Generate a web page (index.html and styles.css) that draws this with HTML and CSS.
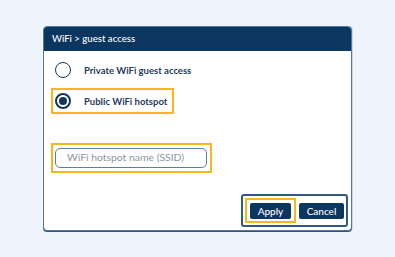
FILE: index.html
```html
<!DOCTYPE html>
<html>
<head>
<meta charset="utf-8">
<link rel="stylesheet" href="styles.css">
</head>
<body>
<div class="dialog">
  <div class="header">WiFi &gt; guest access</div>
  <div class="content">
    <div class="option">
      <span class="radio"></span>
      <span class="label">Private WiFi guest access</span>
    </div>
    <div class="option focus">
      <span class="radio checked"></span>
      <span class="label">Public WiFi hotspot</span>
    </div>
    <div class="field focus">
      <div class="input">WiFi hotspot name (SSID)</div>
    </div>
    <div class="footer">
      <div class="btnwrap focus"><button class="btn">Apply</button></div>
      <button class="btn cancel">Cancel</button>
    </div>
  </div>
</div>
</body>
</html>
```

FILE: styles.css
```css
html, body {
  margin: 0;
  padding: 0;
  background: #eef5fc;
  width: 395px;
  height: 257px;
  overflow: hidden;
  font-family: "Lato", "Liberation Sans", sans-serif;
}
.dialog {
  box-sizing: border-box;
  margin: 26px 0 0 43px;
  width: 309px;
  height: 205px;
  background: #fff;
  border: 1px solid #55799a;
  border-radius: 4px;
  box-shadow: 0 1px 0 #2b5780, 1px 0 0 #c9d7e4;
  display: flex;
  flex-direction: column;
  overflow: hidden;
}
.header {
  height: 24px;
  background: #0b3660;
  color: #fff;
  font-size: 9.6px;
  font-weight: 500;
  line-height: 24px;
  padding-left: 8px;
  flex: none;
}
.content {
  flex: 1;
  display: flex;
  flex-direction: column;
  align-items: flex-start;
  padding: 6px 3px 3px 7px;
}
.option {
  box-sizing: border-box;
  height: 26px;
  display: flex;
  align-items: center;
  gap: 13px;
  padding: 0 5px 0 2px;
  border: 2px solid transparent;
  margin-bottom: 5px;
}
.focus {
  border: 2px solid #f6b81c;
}
.radio {
  box-sizing: border-box;
  width: 16px;
  height: 16px;
  border: 1.5px solid #13365c;
  border-radius: 50%;
  display: flex;
  align-items: center;
  justify-content: center;
}
.radio.checked {
  border: 2px solid #13365c;
}
.radio.checked::after {
  content: "";
  width: 8px;
  height: 8px;
  border-radius: 50%;
  background: #13365c;
}
.label {
  font-size: 9.5px;
  font-weight: 700;
  color: #1f3b5c;
}
.field {
  box-sizing: border-box;
  margin-top: 24px;
  padding: 3px 3px 3px 2px;
}
.input {
  box-sizing: border-box;
  width: 152px;
  height: 20px;
  border: 1.5px solid #5d7d99;
  border-radius: 5px;
  padding-left: 11px;
  font-size: 10.4px;
  line-height: 17px;
  color: #8a95a1;
}
.footer {
  margin-top: auto;
  align-self: flex-end;
  display: flex;
  align-items: center;
  gap: 3px;
  border: 2px solid #34597e;
  border-radius: 3px;
  padding: 2px;
}
.btnwrap {
  padding: 3px 3px 2px 3px;
}
.btn {
  display: block;
  height: 16px;
  border: none;
  border-radius: 2px;
  background: #0b3660;
  color: #fff;
  font-family: "Lato", "Liberation Sans", sans-serif;
  font-size: 10px;
  font-weight: 500;
  padding: 0;
  width: 41px;
  line-height: 16px;
}
.btn.cancel {
  width: 45px;
}
```
